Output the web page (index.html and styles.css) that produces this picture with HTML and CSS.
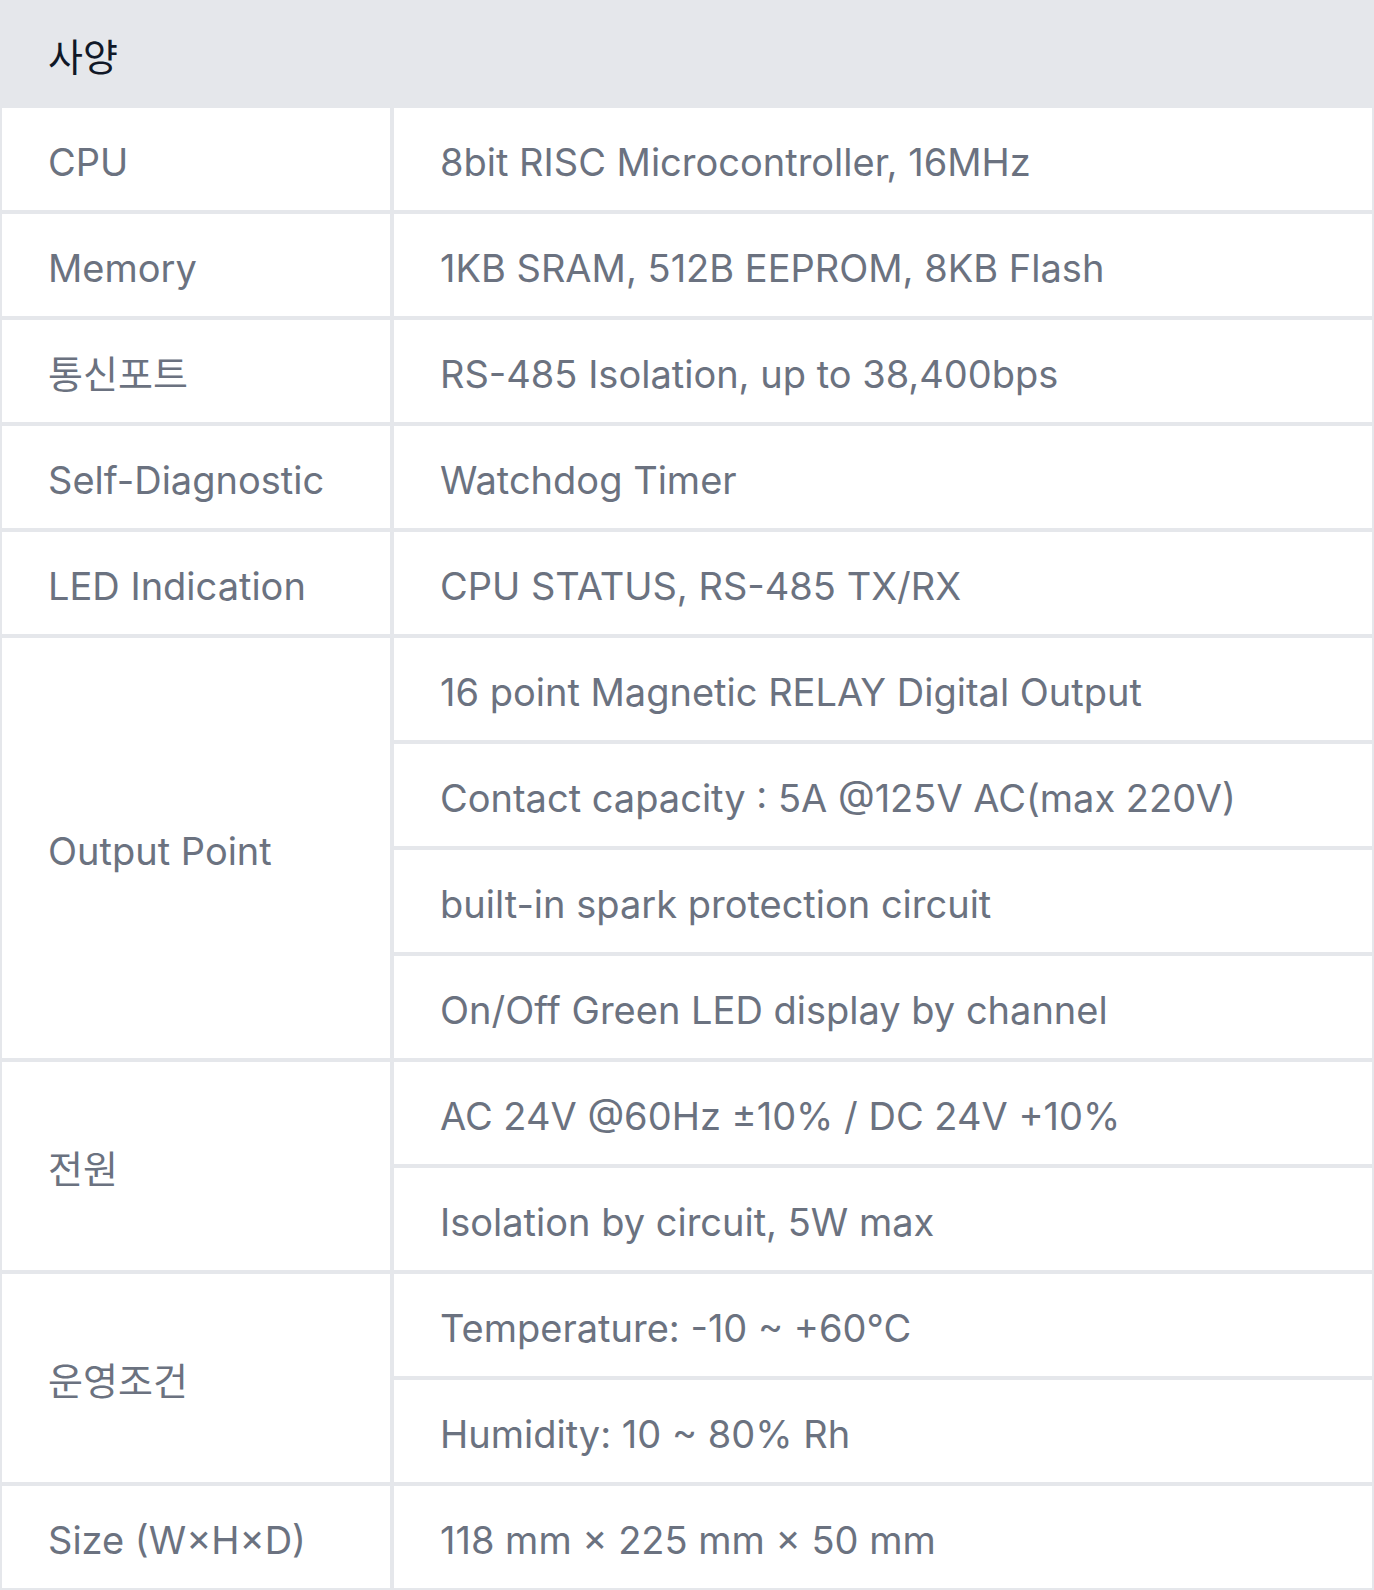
FILE: index.html
```html
<!DOCTYPE html>
<html lang="ko">
<head>
<meta charset="utf-8">
<title>사양</title>
<link rel="stylesheet" href="styles.css">
</head>
<body>
<table class="spec">
  <colgroup><col class="col-key"><col class="col-val"></colgroup>
  <thead>
    <tr><th colspan="2">사양</th></tr>
  </thead>
  <tbody>
    <tr><td>CPU</td><td>8bit RISC Microcontroller, 16MHz</td></tr>
    <tr><td>Memory</td><td>1KB SRAM, 512B EEPROM, 8KB Flash</td></tr>
    <tr><td>통신포트</td><td>RS-485 Isolation, up to 38,400bps</td></tr>
    <tr><td>Self-Diagnostic</td><td>Watchdog Timer</td></tr>
    <tr><td>LED Indication</td><td>CPU STATUS, RS-485 TX/RX</td></tr>
    <tr><td rowspan="4">Output Point</td><td>16 point Magnetic RELAY Digital Output</td></tr>
    <tr><td>Contact capacity : 5A @125V AC(max 220V)</td></tr>
    <tr><td>built-in spark protection circuit</td></tr>
    <tr><td>On/Off Green LED display by channel</td></tr>
    <tr><td rowspan="2">전원</td><td>AC 24V @60Hz ±10% / DC 24V +10%</td></tr>
    <tr><td>Isolation by circuit, 5W max</td></tr>
    <tr><td rowspan="2">운영조건</td><td>Temperature: -10 ~ +60°C</td></tr>
    <tr><td>Humidity: 10 ~ 80% Rh</td></tr>
    <tr><td>Size (W×H×D)</td><td>118 mm × 225 mm × 50 mm</td></tr>
  </tbody>
</table>
</body>
</html>
```

FILE: styles.css
```css
html, body {
  margin: 0;
  padding: 0;
  background: #ffffff;
}

body {
  font-family: Inter, "Noto Sans CJK KR", sans-serif;
}

.spec {
  width: 1374px;
  border-collapse: separate;
  border-spacing: 0;
  table-layout: fixed;
}

.col-key {
  width: 392px;
}

.spec th,
.spec td {
  box-sizing: border-box;
  border: 2px solid #e5e7eb;
  padding: 27px 46px 21px 46px;
  font-size: 38px;
  line-height: 54px;
  text-align: left;
  vertical-align: middle;
}

.spec th {
  padding-top: 28px;
  padding-bottom: 20px;
  background: #e5e7eb;
  color: #111827;
  font-weight: 400;
}

.spec td {
  color: #6b7280;
  font-weight: 400;
}
```
